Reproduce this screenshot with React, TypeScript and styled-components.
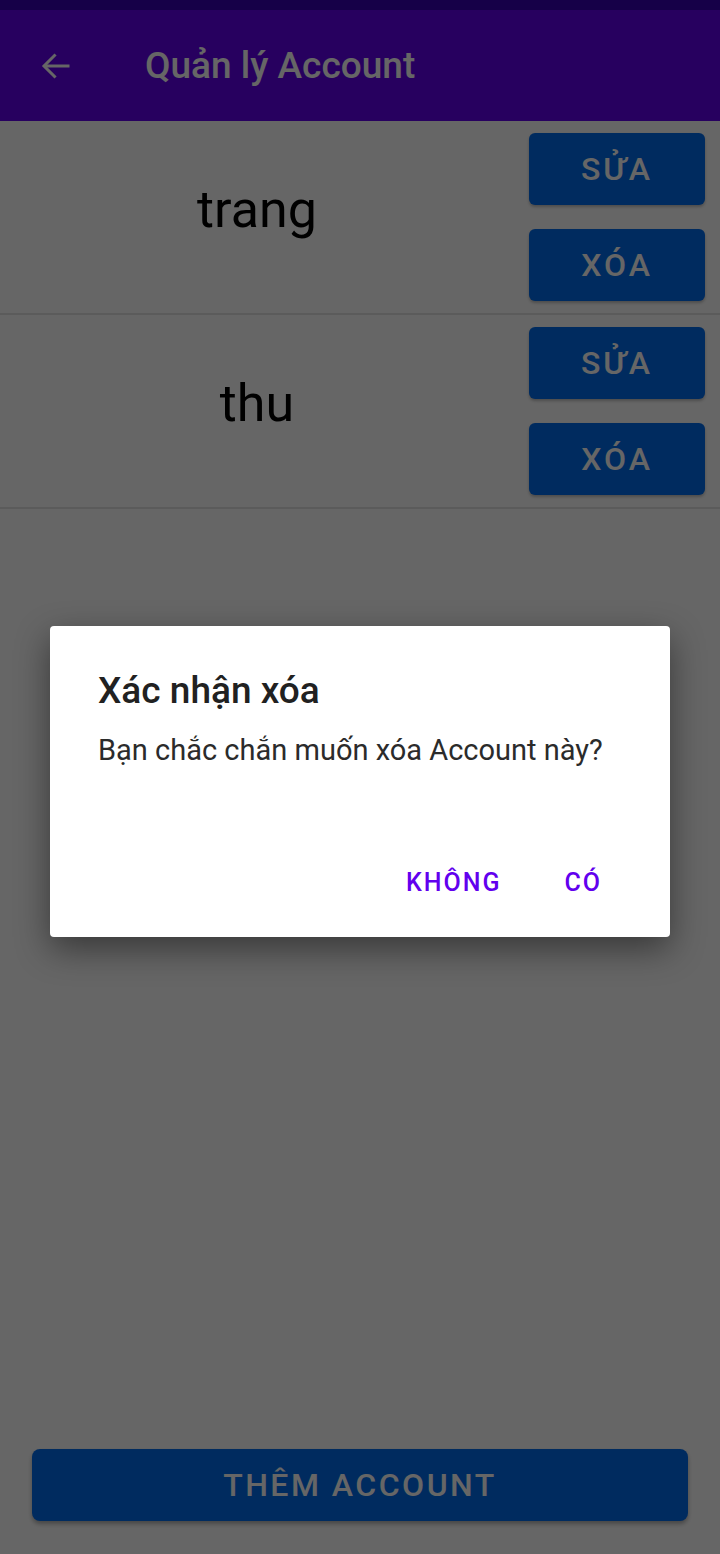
import React from "react";
import styled, { createGlobalStyle } from "styled-components";

const Global = createGlobalStyle`
  html, body { margin: 0; padding: 0; background: #ffffff; }
  body { font-family: Roboto, "Noto Sans", "Liberation Sans", sans-serif; }
  * { box-sizing: border-box; }
`;

const Screen = styled.div`
  position: relative;
  width: 720px;
  height: 1554px;
  display: flex;
  flex-direction: column;
  background: #ffffff;
  overflow: hidden;
`;

const StatusBar = styled.div`
  height: 10px;
  background: #3700b3;
  flex-shrink: 0;
`;

const AppBar = styled.header`
  height: 111px;
  background: #6200ee;
  display: flex;
  align-items: center;
  padding-left: 38px;
  gap: 71px;
  flex-shrink: 0;
`;

const BackIcon = styled.svg`
  width: 36px;
  height: 36px;
  flex-shrink: 0;
`;

const Title = styled.h1`
  margin: 0;
  font-size: 37px;
  font-weight: 500;
  color: #ffffff;
  letter-spacing: 0;
`;

const List = styled.div`
  display: flex;
  flex-direction: column;
`;

const Row = styled.div`
  display: flex;
  align-items: center;
  border-bottom: 2px solid #e3e3e3;
  padding: 12px 15px 12px 0;
`;

const Name = styled.div`
  flex: 1;
  text-align: center;
  font-size: 52px;
  color: #000000;
  padding-bottom: 16px;
`;

const Actions = styled.div`
  display: flex;
  flex-direction: column;
  gap: 24px;
  padding-left: 15px;
`;

const ActionButton = styled.button`
  width: 176px;
  height: 72px;
  border: none;
  border-radius: 6px;
  background: #006cee;
  color: #ffffff;
  font-family: inherit;
  font-size: 32px;
  font-weight: 500;
  letter-spacing: 3px;
  padding: 0;
  box-shadow: 0 2px 3px rgba(0, 0, 0, 0.25);
`;

const Spacer = styled.div`
  flex: 1;
`;

const AddButton = styled.button`
  margin: 0 32px 33px;
  height: 72px;
  border: none;
  border-radius: 8px;
  background: #006cee;
  color: #ffffff;
  font-family: inherit;
  font-size: 32px;
  font-weight: 500;
  letter-spacing: 2.5px;
  box-shadow: 0 3px 4px rgba(0, 0, 0, 0.3);
`;

const Scrim = styled.div`
  position: absolute;
  inset: 0;
  background: rgba(0, 0, 0, 0.6);
  display: flex;
  align-items: center;
  justify-content: center;
  padding-top: 9px;
`;

const Dialog = styled.div`
  width: 620px;
  height: 311px;
  background: #ffffff;
  border-radius: 4px;
  box-shadow: 0 12px 34px rgba(0, 0, 0, 0.45);
  display: flex;
  flex-direction: column;
  padding: 42px 0 0;
`;

const DialogTitle = styled.h2`
  margin: 0;
  padding: 0 48px;
  font-size: 37px;
  line-height: 46px;
  font-weight: 500;
  color: #212121;
`;

const DialogMessage = styled.p`
  margin: 0;
  padding: 16px 48px 0;
  font-size: 29px;
  line-height: 40px;
  color: #2b2b2b;
`;

const DialogActions = styled.div`
  margin-top: auto;
  display: flex;
  justify-content: flex-end;
  gap: 31px;
  padding: 0 52px 19px;
`;

const TextButton = styled.button`
  height: 72px;
  border: none;
  background: transparent;
  color: #6200ee;
  font-family: inherit;
  font-size: 25px;
  font-weight: 500;
  letter-spacing: 2px;
  padding: 0 16px;
`;

const accounts = ["trang", "thu"];

export default function App() {
  return (
    <>
      <Global />
      <Screen>
        <StatusBar />
        <AppBar>
          <BackIcon viewBox="0 0 24 24" fill="none" stroke="#ffffff" strokeWidth="2" strokeLinecap="square">
            <path d="M20 12H5" />
            <path d="M11 5l-7 7 7 7" />
          </BackIcon>
          <Title>Quản lý Account</Title>
        </AppBar>
        <List>
          {accounts.map((a) => (
            <Row key={a}>
              <Name>{a}</Name>
              <Actions>
                <ActionButton>SỬA</ActionButton>
                <ActionButton>XÓA</ActionButton>
              </Actions>
            </Row>
          ))}
        </List>
        <Spacer />
        <AddButton>THÊM ACCOUNT</AddButton>
        <Scrim>
          <Dialog>
            <DialogTitle>Xác nhận xóa</DialogTitle>
            <DialogMessage>Bạn chắc chắn muốn xóa Account này?</DialogMessage>
            <DialogActions>
              <TextButton>KHÔNG</TextButton>
              <TextButton>CÓ</TextButton>
            </DialogActions>
          </Dialog>
        </Scrim>
      </Screen>
    </>
  );
}
